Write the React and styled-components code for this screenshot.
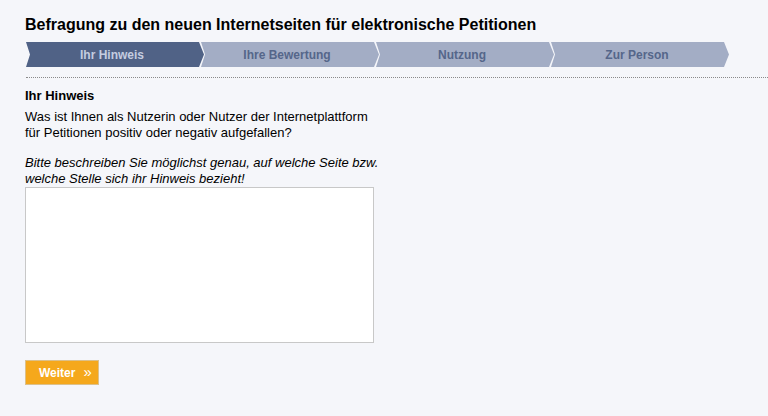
import styled, { createGlobalStyle } from "styled-components";

const GlobalStyle = createGlobalStyle`
  html, body {
    margin: 0;
    padding: 0;
    background: #f5f6fa;
  }
  body {
    font-family: "Liberation Sans", Arial, sans-serif;
    color: #000;
  }
`;

const steps = ["Ihr Hinweis", "Ihre Bewertung", "Nutzung", "Zur Person"];

const App = () => {
  return (
    <Page>
      <GlobalStyle />
      <Title>Befragung zu den neuen Internetseiten für elektronische Petitionen</Title>
      <StepBar>
        {steps.map((step, index) => (
          <Step key={step} active={index === 0}>
            {step}
          </Step>
        ))}
      </StepBar>
      <Divider />
      <Section>
        <SectionTitle>Ihr Hinweis</SectionTitle>
        <Question>
          Was ist Ihnen als Nutzerin oder Nutzer der Internetplattform
          <br />
          für Petitionen positiv oder negativ aufgefallen?
        </Question>
        <Hint>
          Bitte beschreiben Sie möglichst genau, auf welche Seite bzw.
          <br />
          welche Stelle sich ihr Hinweis bezieht!
        </Hint>
        <TextArea />
        <NextButton type="button">
          Weiter <Arrows>»</Arrows>
        </NextButton>
      </Section>
    </Page>
  );
};

export default App;

// Styles

const Page = styled.div`
  padding: 16px 0 0 25px;
`;

const Title = styled.h1`
  margin: 0 0 8px 0;
  font-size: 16px;
  line-height: 18px;
  font-weight: bold;
`;

const StepBar = styled.div`
  display: flex;
  padding-left: 1px;
`;

const Step = styled.div`
  width: 178px;
  height: 25px;
  margin-right: -4px;
  padding-right: 6px;
  box-sizing: border-box;
  display: flex;
  align-items: center;
  justify-content: center;
  font-size: 12px;
  font-weight: bold;
  background: ${(props) => (props.active ? "#506286" : "#a3adc5")};
  color: ${(props) => (props.active ? "#c5cde0" : "#55668a")};
  clip-path: polygon(
    0 0,
    calc(100% - 5px) 0,
    100% 50%,
    calc(100% - 5px) 100%,
    0 100%,
    4px 50%
  );

  & + & {
    margin-left: 1px;
  }
`;

const Divider = styled.hr`
  margin: 10px 0 0 1px;
  border: 0;
  border-top: 1px dotted #8a8a8a;
  height: 0;
`;

const Section = styled.div`
  padding-top: 10px;
`;

const SectionTitle = styled.h2`
  margin: 0 0 5px 0;
  font-size: 13px;
  line-height: 16px;
  font-weight: bold;
`;

const Question = styled.p`
  margin: 0 0 14px 0;
  font-size: 13px;
  line-height: 16px;
`;

const Hint = styled.p`
  margin: 0;
  font-size: 13px;
  line-height: 16px;
  font-style: italic;
`;

const TextArea = styled.textarea`
  display: block;
  box-sizing: border-box;
  width: 349px;
  height: 156px;
  margin: 0;
  border: 1px solid #c8c8c8;
  background: #fff;
  resize: none;
  font-family: "Liberation Sans", Arial, sans-serif;
`;

const NextButton = styled.button`
  display: flex;
  align-items: center;
  gap: 8px;
  margin-top: 17px;
  box-sizing: border-box;
  width: 74px;
  height: 25px;
  padding: 0 0 0 13px;
  border: 1px solid #dcc08a;
  background: #f5a81c;
  color: #fff;
  font-family: "Liberation Sans", Arial, sans-serif;
  font-size: 12px;
  font-weight: bold;
`;

const Arrows = styled.span`
  font-size: 15px;
  font-weight: normal;
  line-height: 1;
  margin-top: -2px;
`;
